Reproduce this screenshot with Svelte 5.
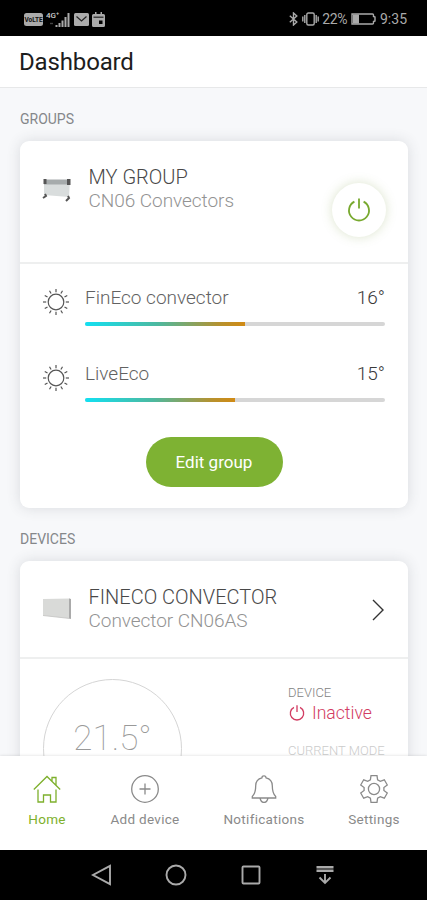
<script lang="ts">
	type Heater = { name: string; target: number; fill: number };

	const heaters: Heater[] = [
		{ name: 'FinEco convector', target: 16, fill: 53.3 },
		{ name: 'LiveEco', target: 15, fill: 50 }
	];

	const rays = Array.from({ length: 12 }, (_, i) => i * 30);

	let activeTab = $state('home');
</script>

{#snippet power()}
	<svg class="power-icon" viewBox="0 0 24 24" aria-hidden="true">
		<path d="M7.4 3.6A10 10 0 1 0 16.6 3.6M12 .5v10" />
	</svg>
{/snippet}

<div class="screen">
	<div class="status">
		<div class="status-left">
			<svg width="19" height="13" viewBox="0 0 19 13">
				<rect width="19" height="13" rx="2.5" fill="#aaa" />
				<text x="9.5" y="9" text-anchor="middle" class="volte">VoLTE</text>
			</svg>
			<svg width="25" height="15" viewBox="0 0 25 15">
				<text x="0" y="6" class="net">4G⁺</text>
				<path class="signal" d="M10.5 15v-2M13.5 15v-4M16.5 15V8.5M19.5 15V5M22.5 15V1" />
				<path class="dim" d="M4 11.5h3" />
			</svg>
			<svg width="15" height="13" viewBox="0 0 15 13">
				<rect width="15" height="13" rx="1.5" fill="#aaa" />
				<path d="M2.500 3.500l5 4.500 5-4.500" class="cut" />
			</svg>
			<svg width="13" height="15" viewBox="0 0 13 15">
				<path d="M0 3.500q0-1.500 1.500-1.500H3V0h1.500v2h4V0H10v2h1.500q1.500 0 1.500 1.500v10q0 1.500-1.500 1.500h-10Q0 15 0 13.500z" class="solid" />
				<path d="M1.500 5.200h10" class="cut" />
				<rect x="7" y="8.500" width="3.500" height="3.500" fill="#000" />
			</svg>
		</div>
		<div class="status-right">
			<svg width="9" height="14" viewBox="0 0 9 14">
				<path d="M.8 3.800l7 6.200-3.300 3V1l3.300 3-7 6.200" />
			</svg>
			<svg width="17" height="14" viewBox="0 0 17 14">
				<rect x="4.800" y="1" width="7.400" height="12" rx="1.500" />
				<path d="M2.800 3v8M.8 4.500v5M14.200 3v8M16.200 4.500v5" />
			</svg>
			<span class="battery-level">22%</span>
			<svg class="battery" width="25" height="12" viewBox="0 0 25 12">
				<path d="M1 1h20.500q1 0 1 1v1.500l1.500.500v4l-1.500.500V10q0 1-1 1H1z" />
				<rect x="2" y="1.500" width="6" height="9" class="charge" />
			</svg>
			<span>9:35</span>
		</div>
	</div>

	<header><h1>Dashboard</h1></header>

	<main>
		<h2>GROUPS</h2>
		<section class="card group">
			<div class="card-head">
				<svg class="thumb rail" viewBox="0 0 30 26">
					<path d="M2 3h26l-1 17L2 18z" fill="#d9dddd" />
					<path d="M2 2.500h26v5H2z" fill="#a6abac" />
					<path d="M1.500 2h3v5h-3zM25 2h3.500v6H25z" fill="#555" />
					<path d="M3 17l1 2-3 2M26 19l1 2-3 3" fill="none" stroke="#555" stroke-width="2" />
				</svg>
				<div class="title">
					<h3>MY GROUP</h3>
					<p>CN06 Convectors</p>
				</div>
				<button type="button" class="power" aria-label="Toggle group">
					{@render power()}
				</button>
			</div>
			<div class="heaters">
				{#each heaters as heater}
					<div class="heater">
						<svg class="sun" viewBox="-14 -14 28 28" aria-hidden="true">
							<circle r="7.800" />
							{#each rays as angle}
								<path d="M0-9.800v-3.200" transform="rotate({angle})" />
							{/each}
						</svg>
						<div class="heater-body">
							<div class="heater-label">
								<span>{heater.name}</span>
								<span class="target">{heater.target}°</span>
							</div>
							<div class="track">
								<div class="fill" style="width: {heater.fill}%"></div>
							</div>
						</div>
					</div>
				{/each}
			</div>
			<button type="button" class="edit">Edit group</button>
		</section>

		<h2 class="devices-title">DEVICES</h2>
		<section class="card device">
			<div class="card-head">
				<svg class="thumb" viewBox="0 0 30 26">
					<path d="M1 4l27-.5v20L1 20.500z" fill="#d9dad8" />
					<path d="M27 3.500l2 .5v20l-2-.5z" fill="#aaa" />
					<path d="M1 20.500l27 3" stroke="#c2c2c0" stroke-width=".8" />
				</svg>
				<div class="title">
					<h3>FINECO CONVECTOR</h3>
					<p>Convector CN06AS</p>
				</div>
				<svg class="chevron" viewBox="0 0 12 22"><path d="M1 1l10 10L1 21" /></svg>
			</div>
			<div class="device-body">
				<div class="dial"><span>21.5°</span></div>
				<div class="info">
					<span class="label">DEVICE</span>
					<span class="inactive">{@render power()}Inactive</span>
					<span class="label mode">CURRENT MODE</span>
				</div>
			</div>
		</section>
	</main>

	<nav class="tabs">
		<button type="button" class="home" class:active={activeTab === 'home'} onclick={() => (activeTab = 'home')}>
			<svg viewBox="0 0 28 28">
				<path d="M.8 14.500L14 1.500l13.200 13M19 6V2.500h4V10M5 14.500V27h5.500v-7h7v7H23V14.500" />
			</svg>
			Home
		</button>
		<button type="button" class="add" class:active={activeTab === 'add'} onclick={() => (activeTab = 'add')}>
			<svg viewBox="0 0 28 28"><circle cx="14" cy="14" r="13.300" /><path d="M14 8.500v11M8.500 14h11" /></svg>
			Add device
		</button>
		<button type="button" class="alerts" class:active={activeTab === 'alerts'} onclick={() => (activeTab = 'alerts')}>
			<svg viewBox="0 0 28 28">
				<path d="M12 2.800q0-2 2-2t2 2c4.500 1 6.300 4 6.300 8 0 6 1 8.500 3.400 10.700V23H2.300v-1.500c2.400-2.200 3.400-4.700 3.400-10.700 0-4 1.800-7 6.300-8zM10 23q1 4.500 4 4.500t4-4.500" />
			</svg>
			Notifications
		</button>
		<button type="button" class="settings" class:active={activeTab === 'settings'} onclick={() => (activeTab = 'settings')}>
			<svg viewBox="0 0 28 28">
				<circle cx="14" cy="14" r="5.600" />
				<path d="M11 .700h6l.6 4.200 2.700 1.500 4-1.600 3 5.200-3.400 2.500v3l3.400 2.500-3 5.200-4-1.600-2.700 1.500-.6 4.200h-6l-.6-4.200-2.700-1.500-4 1.600-3-5.200 3.400-2.500v-3L.7 10l3-5.200 4 1.600 2.700-1.500z" />
			</svg>
			Settings
		</button>
	</nav>

	<div class="system">
		<svg viewBox="0 0 22 22"><path d="M19 1.800v18.400L2 11z" /></svg>
		<svg viewBox="0 0 22 22"><circle cx="11" cy="11" r="9.500" /></svg>
		<svg viewBox="0 0 22 22"><rect x="2.500" y="2.500" width="17" height="17" rx="1" /></svg>
		<svg viewBox="0 0 22 22">
			<path d="M2.500 3.200h17M2.500 6.700h17" class="bars" />
			<path d="M11 10v9M5.500 13.500L11 19l5.500-5.500" />
		</svg>
	</div>
</div>

<style>
	:global(body) {
		margin: 0;
	}

	.screen {
		height: 900px;
		display: flex;
		flex-direction: column;
		overflow: hidden;
		background: #f7f8fa;
		font-family: Roboto, 'Liberation Sans', sans-serif;
		font-weight: 300;
	}

	svg {
		display: block;
		flex: none;
		fill: none;
	}

	h1,
	h2,
	h3,
	p {
		margin: 0;
	}

	button {
		font-family: inherit;
		border: 0;
		padding: 0;
	}

	.status {
		flex: none;
		height: 36px;
		box-sizing: border-box;
		padding: 2px 20px 0 24px;
		display: flex;
		align-items: center;
		justify-content: space-between;
		background: #000;
		color: #aaa;
		font-size: 14px;
		font-weight: 400;
	}
	.status-left,
	.status-right {
		display: flex;
		align-items: center;
	}
	.status-left {
		gap: 3px;
	}
	.status svg {
		stroke: #aaa;
		stroke-width: 1.4;
	}
	.status svg rect[fill],
	.status text {
		stroke: none;
	}
	.status .signal {
		stroke-width: 2;
	}
	.status .solid {
		fill: #aaa;
		stroke: none;
	}
	.status .cut {
		stroke: #222;
		stroke-width: 1.2;
	}
	.status .dim {
		stroke: #444;
	}
	.volte {
		font-size: 6.5px;
		font-weight: 700;
		fill: #111;
	}
	.net {
		font-size: 8px;
		font-weight: 500;
		fill: #ccc;
	}
	.battery-level {
		margin-left: 3px;
		letter-spacing: -0.4px;
	}
	.battery {
		margin: 0 4px 0 4px;
	}
	.status .charge {
		fill: #aaa;
		stroke: none;
	}
	.status-right svg + svg {
		margin-left: 4px;
	}

	header {
		flex: none;
		height: 52px;
		box-sizing: border-box;
		padding-left: 19px;
		display: flex;
		align-items: center;
		background: #fff;
		border-bottom: 1px solid #e7e8e9;
	}
	h1 {
		font-size: 24px;
		font-weight: 400;
		color: #1d1d1d;
		letter-spacing: -0.15px;
	}

	main {
		flex: 1;
		min-height: 0;
		overflow: hidden;
		padding: 0 19px 0 20px;
	}
	h2 {
		padding-top: 21px;
		height: 32px;
		line-height: 20px;
		font-size: 14px;
		font-weight: 400;
		color: #85878a;
	}
	.devices-title {
		height: 32px;
	}

	.card {
		background: #fff;
		border-radius: 9px;
		box-shadow: 0 0 14px rgba(60, 70, 80, 0.16);
	}
	.group {
		height: 367px;
		display: flex;
		flex-direction: column;
	}
	.card-head {
		box-sizing: border-box;
		display: flex;
		align-items: flex-start;
		padding: 24px 22px 0 22px;
		border-bottom: 2px solid #eeefef;
	}
	.group .card-head {
		height: 123px;
	}
	.device .card-head {
		height: 98px;
	}
	.thumb {
		width: 30px;
		height: 26px;
		margin-top: 10px;
	}
	.thumb.rail {
		margin-top: 12px;
	}
	.title {
		flex: 1;
		padding-left: 16.5px;
		white-space: nowrap;
	}
	h3 {
		font-size: 20px;
		line-height: 24px;
		font-weight: 300;
		color: #484848;
	}
	.title p {
		font-size: 19px;
		line-height: 24px;
		letter-spacing: -0.05px;
		color: #939393;
	}

	.power {
		width: 54px;
		height: 54px;
		margin-top: 18px;
		border-radius: 50%;
		display: grid;
		place-items: center;
		background: #fff;
		box-shadow: 0 0 11px rgba(120, 150, 60, 0.26);
		color: #78a92f;
	}
	.power-icon {
		width: 24px;
		height: 24px;
		stroke: currentColor;
		stroke-width: 1.8;
	}

	.heaters {
		display: grid;
		gap: 32px;
		padding: 22px 23px 0 22px;
	}
	.heater {
		display: flex;
		height: 44px;
	}
	.sun {
		width: 28px;
		height: 28px;
		margin-top: 2px;
		stroke: #555;
		stroke-width: 1.2;
	}
	.heater-body {
		flex: 1;
		padding-left: 15px;
	}
	.heater-label {
		display: flex;
		justify-content: space-between;
		font-size: 19px;
		line-height: 24px;
		color: #626262;
	}
	.target {
		color: #3a3a3a;
	}
	.track {
		height: 4px;
		margin-top: 12px;
		border-radius: 2px;
		background: #d6d6d6;
		overflow: hidden;
	}
	.fill {
		height: 100%;
		background: linear-gradient(90deg, #12e0f2, #4cb9a0 45%, #b8912d 85%, #d18a14);
	}

	.edit {
		align-self: center;
		width: 137px;
		height: 50px;
		margin-top: 31px;
		border-radius: 25px;
		background: #7eb233;
		color: #fff;
		font-size: 17px;
	}

	.chevron {
		width: 12px;
		height: 22px;
		margin: 14px 2px 0 0;
		stroke: #333;
		stroke-width: 1.4;
	}
	.device-body {
		height: 180px;
		display: flex;
		justify-content: space-between;
		padding: 20px 20px 0 23px;
	}
	.dial {
		box-sizing: border-box;
		width: 139px;
		height: 139px;
		border: 1px solid #d5d5d5;
		border-radius: 50%;
		text-align: center;
		font-size: 35px;
		line-height: 118px;
		font-weight: 100;
		color: #999;
	}
	.info {
		width: 100px;
		display: flex;
		flex-direction: column;
	}
	.label {
		padding-top: 5px;
		font-size: 13px;
		line-height: 18px;
		color: #828282;
		white-space: nowrap;
	}
	.inactive {
		display: flex;
		align-items: center;
		gap: 7px;
		height: 22px;
		font-size: 17.6px;
		color: #d23c62;
	}
	.inactive .power-icon {
		width: 16px;
		height: 16px;
		margin-left: 1px;
		stroke-width: 2;
	}
	.mode {
		padding-top: 18px;
		color: #ccc;
	}

	.tabs {
		flex: none;
		height: 94px;
		display: flex;
		background: #fff;
		box-shadow: 0 0 3px rgba(0, 0, 0, 0.15);
	}
	.tabs button {
		display: flex;
		flex-direction: column;
		align-items: center;
		padding-top: 19px;
		background: none;
		font-size: 13.5px;
		line-height: 16px;
		font-weight: 400;
		letter-spacing: 0.3px;
		color: #8a8a8a;
	}
	.tabs svg {
		width: 28px;
		height: 28px;
		margin-bottom: 8px;
		stroke: currentColor;
		stroke-width: 1.3;
	}
	.tabs .active {
		color: #7eb02c;
	}
	.home {
		width: 94px;
	}
	.add {
		width: 102px;
	}
	.alerts {
		width: 136px;
	}
	.settings {
		width: 84px;
	}

	.system {
		flex: none;
		height: 50px;
		display: flex;
		align-items: center;
		justify-content: center;
		gap: 52.5px;
		background: #000;
	}
	.system svg {
		width: 22px;
		height: 22px;
		stroke: #aaa;
		stroke-width: 1.9;
	}
	.system .bars {
		stroke-width: 2.6;
	}
</style>
